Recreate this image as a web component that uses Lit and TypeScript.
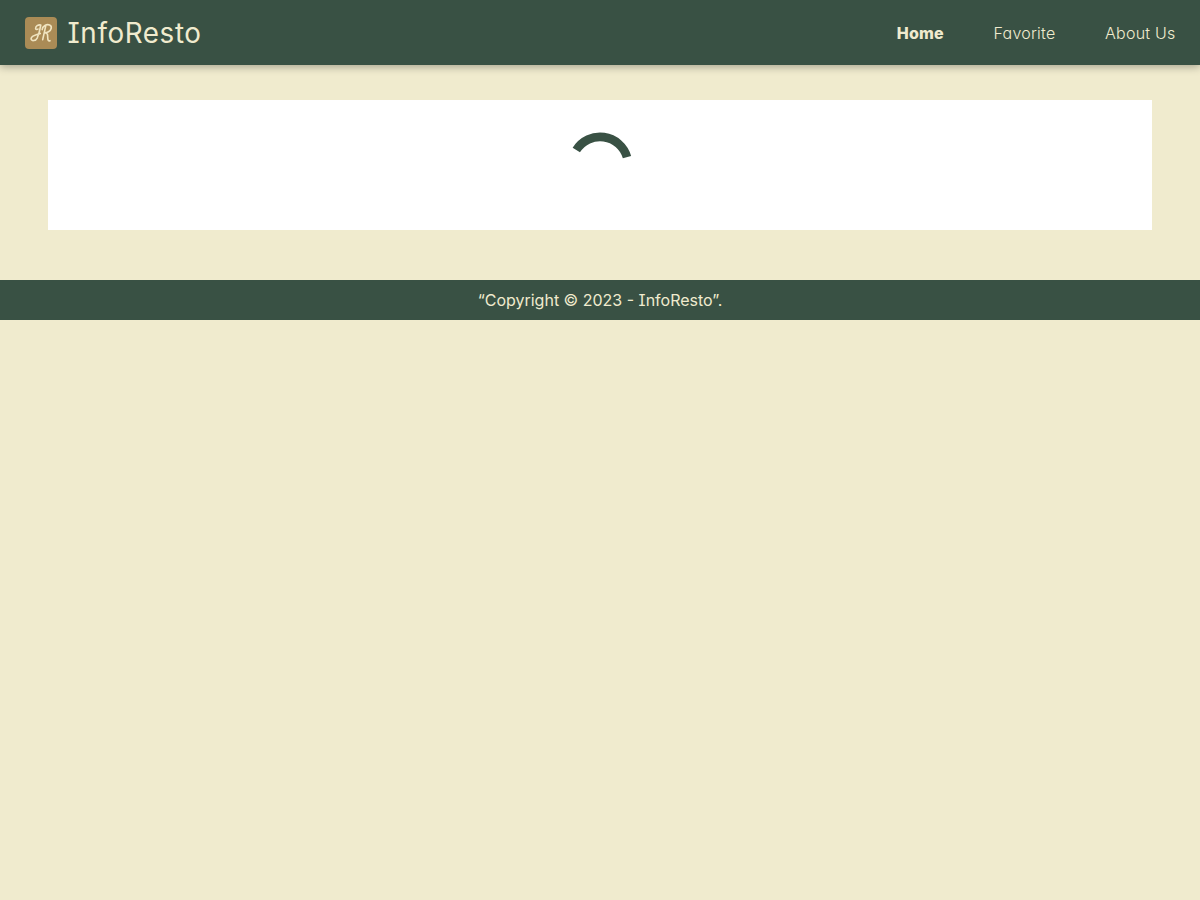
import { LitElement, html, css } from "lit";
import { customElement } from "lit/decorators.js";

@customElement("app-root")
export class AppRoot extends LitElement {
  static styles = css`
    :host {
      display: block;
      min-height: 100vh;
      background: #f0ebce;
      color: #f0ebce;
      font-family: Inter, "Noto Sans", sans-serif;
      font-size: 16px;
      font-feature-settings: "cv08", "cv11";
    }
    .header {
      position: relative;
      box-sizing: border-box;
      height: 65px;
      padding: 0 24.5px 0 25px;
      display: flex;
      align-items: center;
      justify-content: space-between;
      background: #395144;
      box-shadow: 0 2px 8px rgba(0, 0, 0, 0.3);
    }
    .brand {
      display: flex;
      align-items: center;
      gap: 10.5px;
      height: 32px;
    }
    .logo {
      display: block;
      width: 32px;
      height: 32px;
    }
    .name {
      font-size: 27.8px;
      line-height: 32px;
      letter-spacing: 0.6px;
      padding-top: 1px;
    }
    .nav {
      display: flex;
      gap: 49.7px;
      line-height: 20px;
      font-weight: 300;
      letter-spacing: 0.22px;
    }
    .nav .active {
      font-weight: 800;
      letter-spacing: 0.2px;
    }
    .panel {
      box-sizing: border-box;
      height: 130px;
      margin: 35px 48px 50px;
      padding-top: 25px;
      display: flex;
      justify-content: center;
      background: #fff;
    }
    .spinner {
      display: block;
      width: 80px;
      height: 80px;
    }
    .footer {
      box-sizing: border-box;
      height: 40px;
      padding-top: 1px;
      line-height: 39px;
      text-align: center;
      background: #395144;
    }
  `;

  render() {
    return html`
      <header class="header">
        <div class="brand">
          <svg class="logo" viewBox="0 0 32 32" fill="none" stroke="#f0e4c0" stroke-linecap="round" stroke-linejoin="round">
            <rect width="32" height="32" rx="4" fill="#aa8b56" stroke="none" />
            <path stroke-width="1.6" d="M15.8 8C13 7.5 10.6 9.2 10.6 11.4C10.7 12.8 12.2 12.8 13 12M15.8 8C15.1 12 13.9 17 12.3 20.8C10.7 24.2 6.2 24.5 6.1 21.6C6.2 18.7 10.8 18 15.3 16.4" />
            <path stroke-width="1.6" d="M20.7 9.1L17.7 22.7M17.2 12.6C17.4 8.8 21.7 6.9 24.6 8C27.5 9.2 26.4 13.2 23.5 14.7C22.4 15.3 21.1 15.7 19.7 15.8C22.8 15.8 22.7 17.8 22.7 20.4C22.8 23.3 23.4 24.4 25 23.7" />
          </svg>
          <span class="name">InfoResto</span>
        </div>
        <nav class="nav">
          <span class="active">Home</span>
          <span>Favorite</span>
          <span>About Us</span>
        </nav>
      </header>
      <main class="panel">
        <svg class="spinner" viewBox="0 0 80 80" fill="none">
          <path d="M16.3 25.1A28 28 0 0 1 67 32.1" stroke="#395144" stroke-width="8.6" />
        </svg>
      </main>
      <footer class="footer">“Copyright © 2023 - InfoResto”.</footer>
    `;
  }
}
